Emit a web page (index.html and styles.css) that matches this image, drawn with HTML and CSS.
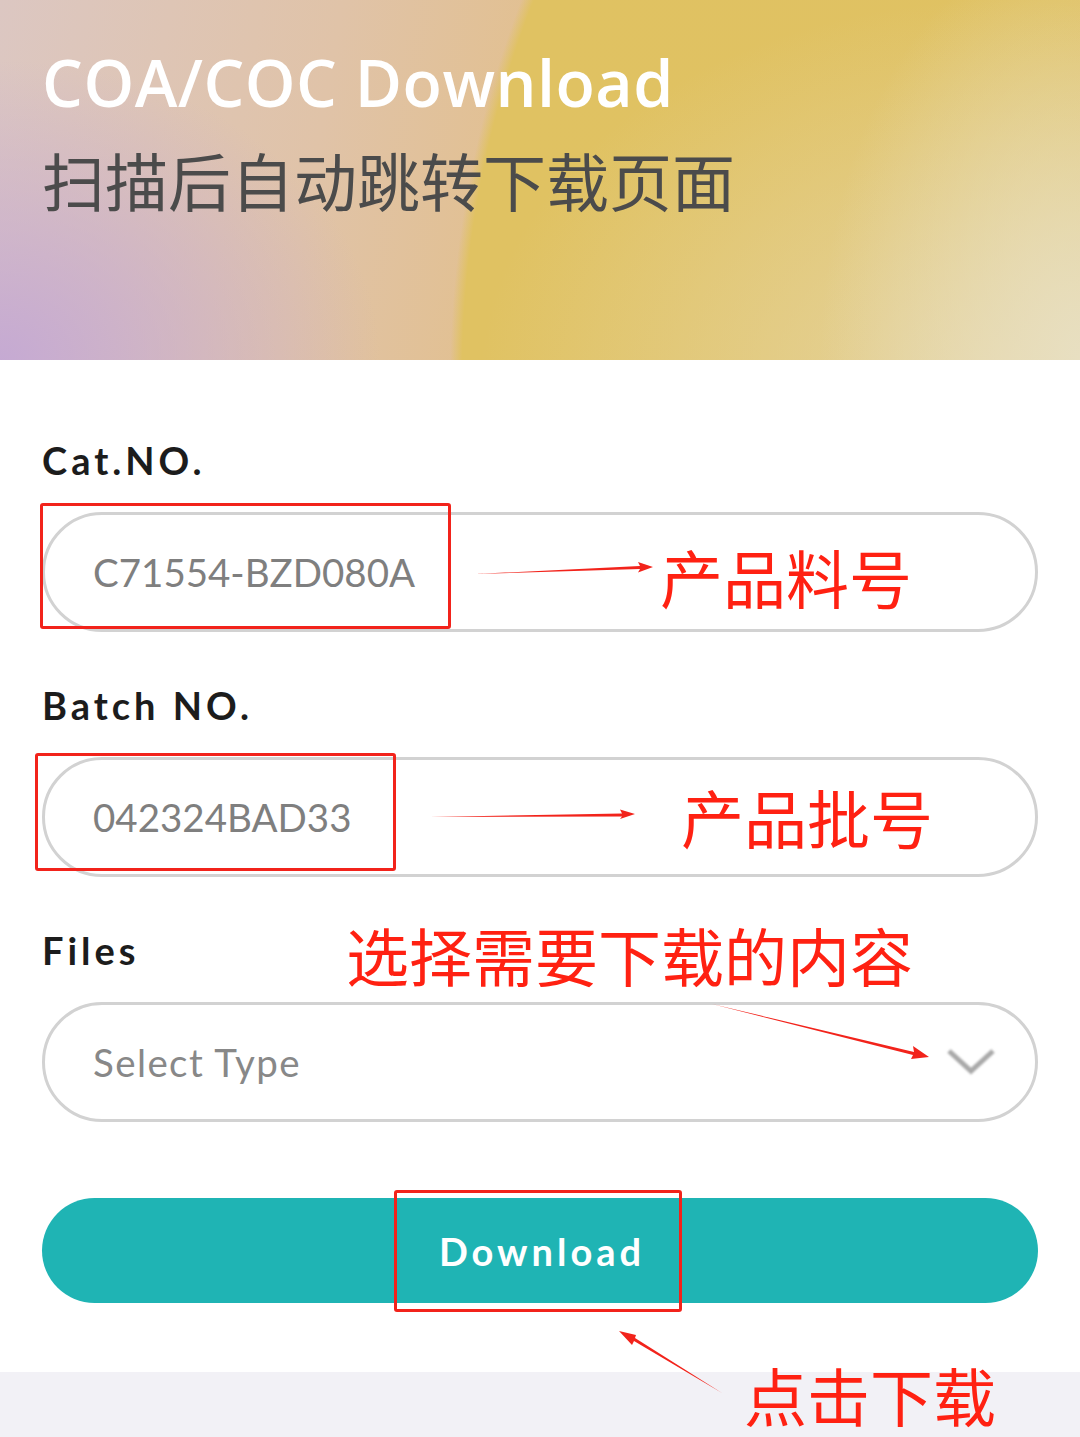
FILE: index.html
```html
<!DOCTYPE html>
<html lang="zh-CN">
<head>
    <meta charset="UTF-8">
    <meta name="viewport" content="width=device-width, initial-scale=1.0">
    <title>COA/COC Download</title>
    <link rel="stylesheet" href="styles.css">
</head>
<body>
    <div class="page">
        <header class="hero">
            <h1>COA/COC Download</h1>
            <p class="subtitle">扫描后自动跳转下载页面</p>
        </header>

        <main class="form">
            <label class="label">Cat.NO.</label>
            <div class="field">C71554-BZD080A</div>

            <label class="label">Batch NO.</label>
            <div class="field">042324BAD33</div>

            <label class="label">Files</label>
            <div class="field select">
                <span class="placeholder">Select Type</span>
                <svg class="chevron" width="56" height="36" viewBox="0 0 56 36">
                    <defs>
                        <filter id="soft" x="-20%" y="-40%" width="140%" height="180%">
                            <feGaussianBlur stdDeviation="0.9"/>
                        </filter>
                    </defs>
                    <polyline points="4,6 26,26 48,6" fill="none" stroke="#a9a9a9" stroke-width="5" filter="url(#soft)"/>
                </svg>
            </div>

            <button class="btn">Download</button>
        </main>

        <div class="bottom-band"></div>

        <!-- 标注 -->
        <div class="mark box-cat"></div>
        <div class="mark box-batch"></div>
        <div class="mark box-btn"></div>
        <div class="note note-cat">产品料号</div>
        <div class="note note-batch">产品批号</div>
        <div class="note note-files">选择需要下载的内容</div>
        <div class="note note-btn">点击下载</div>
        <svg class="arrows" width="1080" height="1437" viewBox="0 0 1080 1437">
            <polygon fill="#f2231b" points="475,574 640,566 638,562 653,567 638,572.5 640,569"/>
            <polygon fill="#f2231b" points="430,817 622,813.5 620,809.5 635,814 620,819 622,816.5"/>
            <polygon fill="#f2231b" points="712,1004 914,1052 913,1046 929,1057 911,1059 913,1055"/>
            <polygon fill="#f2231b" points="722,1393 634,1341 632,1345 619,1331 636,1335 635,1338"/>
        </svg>
    </div>
</body>
</html>
```

FILE: styles.css
```css
* {
    box-sizing: border-box;
}
body {
    margin: 0;
    background: #fff;
    font-family: Lato, "Noto Sans", "Noto Sans CJK SC", sans-serif;
}
.page {
    position: relative;
    width: 1080px;
    min-height: 1437px;
    overflow: hidden;
}
.hero {
    height: 360px;
    padding: 38px 0 0 42px;
    background:
        radial-gradient(ellipse 260px 420px at 1080px 360px, rgba(232, 224, 196, 0.95), rgba(232, 224, 196, 0) 100%),
        radial-gradient(ellipse 520px 380px at 1000px 380px, rgba(230, 214, 168, 0.9), rgba(230, 214, 168, 0) 100%),
        radial-gradient(circle 1048px at 1500px 380px, #e0c163 0, #e0c262 1038px, rgba(224, 194, 98, 0) 1050px),
        radial-gradient(ellipse 380px 300px at 0 360px, rgba(196, 168, 212, 0.95), rgba(196, 168, 212, 0) 100%),
        linear-gradient(100deg, #dcc7c2 0%, #e0c3a8 30%, #e2c090 48%, #e2c18a 60%);
}
.hero h1 {
    margin: 0;
    font-family: "Open Sans", sans-serif;
    font-weight: 600;
    font-size: 64.5px;
    line-height: 88px;
    letter-spacing: 0.5px;
    color: #fff;
}
.subtitle {
    margin: 13px 0 0;
    font-family: "Noto Sans CJK SC", sans-serif;
    font-size: 63px;
    line-height: 80px;
    color: #4b4b4b;
}
.form {
    display: flex;
    flex-direction: column;
    padding: 75px 42px 69px 42px;
}
.label {
    font-weight: 700;
    font-size: 38px;
    line-height: 50px;
    letter-spacing: 4px;
    color: #1c1c1c;
    margin-bottom: 27px;
}
.field {
    height: 120px;
    border: 3px solid #d2d2d2;
    border-radius: 60px;
    padding: 0 48px;
    display: flex;
    align-items: center;
    font-size: 38.5px;
    color: #7f7f7f;
    margin-bottom: 48px;
}
.select {
    justify-content: space-between;
    padding-right: 34px;
    margin-bottom: 76px;
}
.placeholder {
    color: #888;
    letter-spacing: 1.4px;
}
.chevron {
    margin-top: 2px;
}
.btn {
    height: 105px;
    border: none;
    border-radius: 53px;
    background: #1fb4b4;
    color: #fff;
    font-family: Lato, sans-serif;
    font-weight: 700;
    font-size: 38px;
    letter-spacing: 4px;
    text-indent: 4px;
}
.bottom-band {
    height: 65px;
    background: #f2f1f6;
}
.mark {
    position: absolute;
    border: 3px solid #f2231b;
    border-radius: 3px;
}
.box-cat {
    left: 40px;
    top: 503px;
    width: 411px;
    height: 126px;
}
.box-batch {
    left: 35px;
    top: 753px;
    width: 361px;
    height: 118px;
}
.box-btn {
    left: 394px;
    top: 1190px;
    width: 288px;
    height: 122px;
}
.note {
    position: absolute;
    font-family: "Noto Sans CJK SC", sans-serif;
    font-size: 63px;
    line-height: 66px;
    color: #ff2112;
    white-space: nowrap;
}
.note-cat {
    left: 660px;
    top: 543px;
}
.note-batch {
    left: 681px;
    top: 783px;
}
.note-files {
    left: 346px;
    top: 921px;
}
.note-btn {
    left: 744px;
    top: 1361px;
}
.arrows {
    position: absolute;
    left: 0;
    top: 0;
    pointer-events: none;
}
```
